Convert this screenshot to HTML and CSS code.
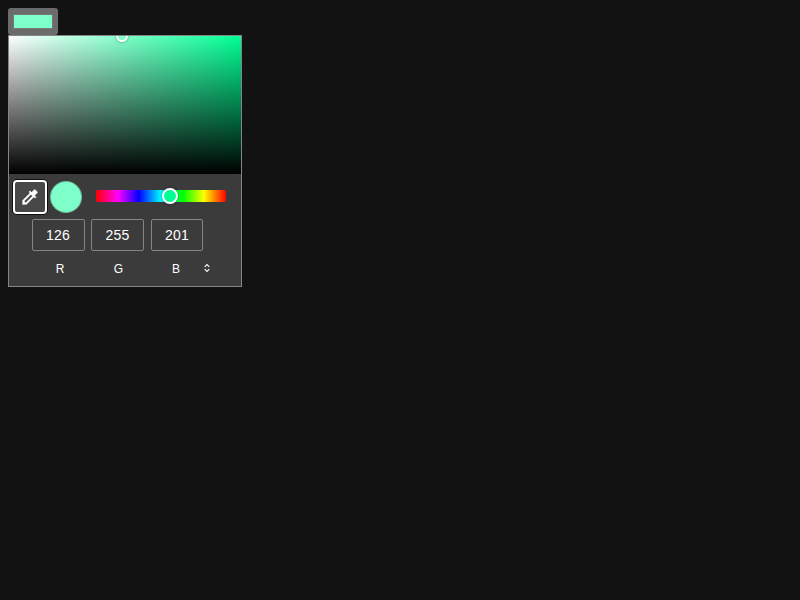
FILE: index.html
```html
<!DOCTYPE html>
<html lang="en">
<head>
<meta charset="utf-8">
<title>Color picker</title>
<link rel="stylesheet" href="styles.css">
</head>
<body>
<button class="color-input" aria-label="Color"><span class="color-input-swatch"></span></button>
<div class="picker">
  <div class="well"><span class="well-ring"></span></div>
  <div class="tools">
    <button class="dropper" aria-label="Pick from screen">
      <svg width="20" height="20" viewBox="0 0 24 24"><path fill="#fff" stroke="#fff" stroke-width="0.3" d="M20.71 5.63l-2.34-2.34a1 1 0 0 0-1.41 0l-3.12 3.12-1.93-1.91-1.41 1.41 1.42 1.42L3 16.25V21h4.75l8.92-8.92 1.42 1.42 1.41-1.41-1.92-1.92 3.12-3.12a1 1 0 0 0 .01-1.42zM6.92 19L5 17.08l8.06-8.06 1.92 1.92L6.92 19z"/></svg>
    </button>
    <span class="viewer"></span>
    <div class="hue"><span class="hue-ring"></span></div>
  </div>
  <div class="channels">
    <div class="value value-first">126</div>
    <div class="value">255</div>
    <div class="value value-last">201</div>
  </div>
  <div class="labels">
    <span>R</span><span>G</span><span>B</span>
    <svg class="toggle" width="8" height="10" viewBox="0 0 8 10"><path fill="none" stroke="#fff" stroke-width="1.1" d="M1.7 3.8L4 1.5l2.3 2.3M1.7 6.2L4 8.5l2.3-2.3"/></svg>
  </div>
</div>
</body>
</html>
```

FILE: styles.css
```css
* { box-sizing: border-box; }

body {
  margin: 8px;
  background: #121212;
  font-family: "Liberation Sans", Arial, sans-serif;
  color: #fff;
}

.color-input {
  display: block;
  width: 50px;
  height: 27px;
  padding: 6px 5px;
  border: 0;
  border-radius: 3px;
  background: #6b6b6b;
}

.color-input-swatch {
  display: block;
  height: 15px;
  border: 1px solid #777;
  background: #7effc9;
}

.picker {
  width: 234px;
  height: 252px;
  border: 1px solid #858585;
  background: #3b3b3b;
}

.well {
  position: relative;
  height: 138px;
  overflow: hidden;
  background:
    linear-gradient(to top, #000, transparent),
    linear-gradient(to right, #fff, transparent),
    #00ff94;
}

.well-ring {
  position: absolute;
  left: 107px;
  top: -6px;
  width: 12px;
  height: 12px;
  border: 2px solid #fff;
  border-radius: 50%;
  box-shadow: 0 0 3px rgba(0, 0, 0, 0.4);
}

.tools {
  display: flex;
  align-items: flex-start;
  padding: 6px 0 0 4px;
}

.dropper {
  display: flex;
  align-items: center;
  justify-content: center;
  width: 34px;
  height: 34px;
  padding: 0;
  border: 2px solid #fff;
  border-radius: 4px;
  background: #484848;
  box-shadow: 0 0 0 1px #101010;
}

.viewer {
  width: 32px;
  height: 32px;
  margin: 1px 14px 0 3px;
  border: 1px solid rgba(90, 130, 110, 0.5);
  border-radius: 50%;
  background: #7effc9;
}

.hue {
  position: relative;
  width: 130px;
  height: 12px;
  margin-top: 10px;
  border-radius: 2px;
  background: linear-gradient(to left, #f00 0%, #ff0 17%, #0f0 33%, #0ff 50%, #00f 67%, #f0f 83%, #f00 100%);
}

.hue-ring {
  position: absolute;
  left: 66px;
  top: -2px;
  width: 16px;
  height: 16px;
  border: 2px solid #fff;
  border-radius: 50%;
  background: #00ff94;
  box-shadow: 0 0 3px rgba(0, 0, 0, 0.4);
}

.channels {
  display: flex;
  gap: 6px;
  padding: 5px 0 0 23px;
}

.value {
  width: 53px;
  height: 32px;
  border: 1px solid #858585;
  border-radius: 2px;
  font-size: 14px;
  letter-spacing: 0.2px;
  line-height: 30px;
  text-align: center;
}

.value-first {
  padding-right: 1px;
}

.value-last {
  width: 52px;
  margin-left: 1px;
}

.labels {
  display: grid;
  grid-template-columns: 58px 59px 56px 8px;
  align-items: center;
  padding: 10px 0 0 22px;
  font-size: 12px;
  line-height: 16px;
  text-align: center;
}

.toggle {
  margin: -2px 0 0 -1px;
}
```
